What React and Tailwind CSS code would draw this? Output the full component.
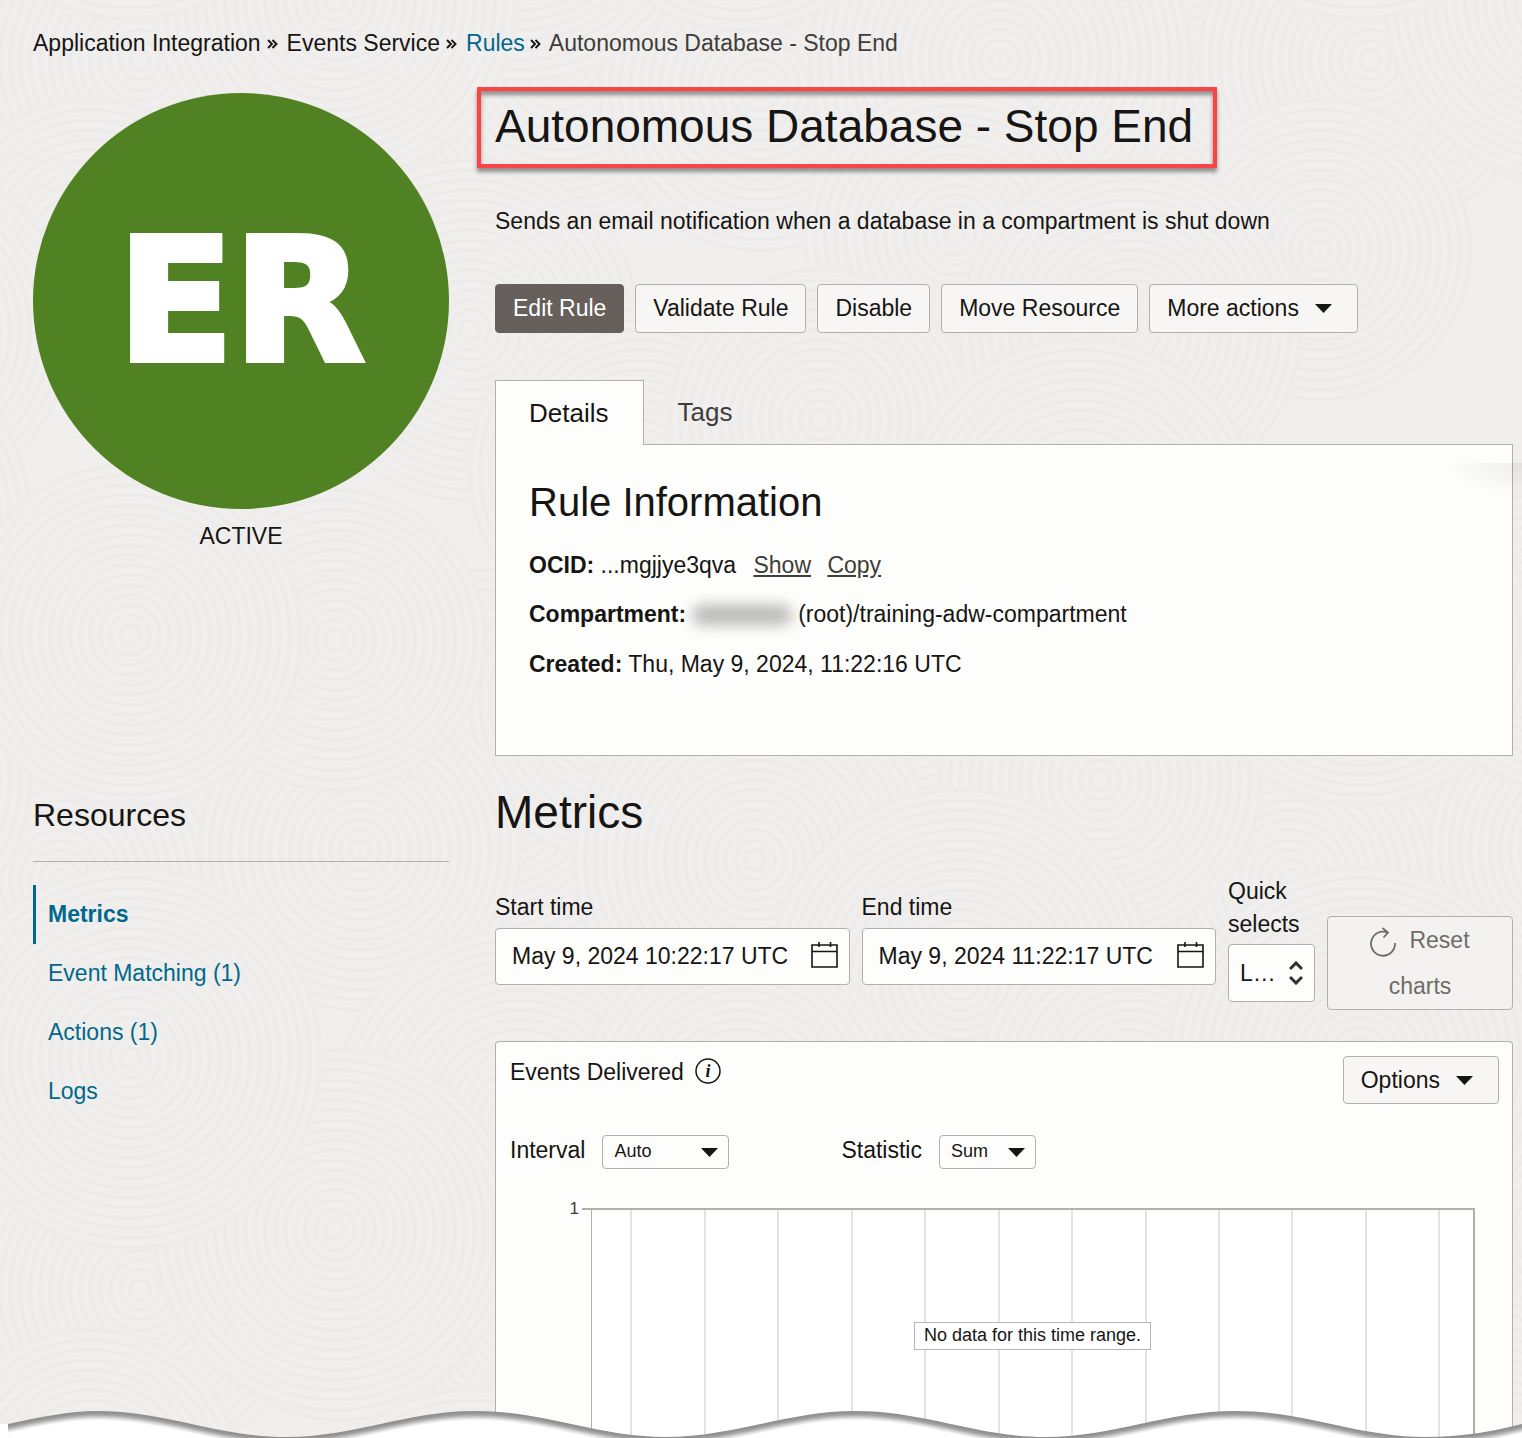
import React from "react";

const RINGS = [
  [480, 760, 190], [60, 880, 170], [0, 90, 150], [140, 60, 170], [340, 40, 150], [560, 60, 180], [760, 90, 160], [1000, 60, 190],
  [90, 250, 150], [470, 330, 170], [640, 470, 170], [955, 235, 150], [1130, 330, 170], [820, 420, 150], [1080, 520, 180],
  [620, 700, 160], [900, 660, 190], [1100, 780, 160], [755, 860, 180], [360, 850, 160], [960, 980, 190], [1130, 1080, 150],
  [520, 1120, 190], [740, 1100, 160], [335, 1230, 180], [130, 1058, 190], [335, 640, 150], [130, 635, 170],
];
const TILE = 1230;

function Backdrop() {
  return (
    <svg aria-hidden="true" className="absolute inset-0 h-full w-full">
      <defs>
        <pattern id="swirl" width={TILE} height={TILE} patternUnits="userSpaceOnUse">
          <rect width={TILE} height={TILE} fill="#f0efed" />
          {RINGS.map(([cx, cy, r], i) =>
            [-TILE, 0, TILE].flatMap((dx) =>
              [-TILE, 0, TILE].map((dy) => (
                <g key={`${i}.${dx}.${dy}`} stroke="#edecea" strokeWidth="4" fill="none">
                  <circle cx={cx + dx} cy={cy + dy} r={r} fill="#f0efed" />
                  {Array.from({ length: Math.floor(r / 10) }, (_, k) => (
                    <circle key={k} cx={cx + dx} cy={cy + dy} r={r - 10 * (k + 1)} />
                  ))}
                </g>
              ))
            )
          )}
        </pattern>
      </defs>
      <rect width="100%" height="100%" fill="url(#swirl)" />
    </svg>
  );
}

function TornEdge() {
  const wave =
    "M8 15 C40 8 70 2 97 2 C165 2 218 28 286 28 C354 28 407 2 475 2 C545 2 597 28 665 28 C735 28 787 2 855 2 C925 2 977 28 1045 28 C1113 28 1167 2 1235 2 C1305 2 1357 28 1425 28 C1462 28 1495 22 1522 15 V60 H8 Z";
  const shades = ["#8f8f8f", "#939393", "#999999", "#a3a3a3", "#b2b2b2", "#c4c4c4", "#d6d6d6", "#e6e6e6", "#f4f4f4", "#ffffff"];
  return (
    <svg aria-hidden="true" viewBox="0 0 1522 29" preserveAspectRatio="none" className="absolute bottom-0 left-0 h-[29px] w-full">
      <rect x="0" y="15" width="9" height="14" fill="#fff" />
      {shades.map((c, i) => (
        <path key={c} d={wave} fill={c} transform={`translate(0 ${i})`} />
      ))}
    </svg>
  );
}

function Chevrons() {
  return (
    <svg aria-hidden="true" width="11" height="10" viewBox="0 0 11 10" fill="none" stroke="#161513" strokeWidth="1.9">
      <path d="M1 1l4 4-4 4M5.500 1l4 4-4 4" />
    </svg>
  );
}

function Caret() {
  return (
    <svg aria-hidden="true" width="17" height="9" viewBox="0 0 17 9" className="pointer-events-none shrink-0">
      <path d="M0 0h17L8.500 9z" fill="#161513" />
    </svg>
  );
}

function CalendarIcon() {
  return (
    <svg aria-hidden="true" width="27" height="26" viewBox="0 0 27 26" fill="none" stroke="#161513" strokeWidth="1.6">
      <path d="M1 3h25v22H1zM1 9.500h25M8 0v5M19.500 0v5" />
    </svg>
  );
}

function TimeField({ id, label, value }) {
  return (
    <div className="flex min-w-0 flex-1 flex-col self-start pt-4">
      <label htmlFor={id} className="mb-1 leading-[33px]">{label}</label>
      <div className="flex h-[57px] items-center rounded border border-[#b4afaa] bg-[#fdfdfb] pr-[11px] pl-4">
        <input id={id} type="text" defaultValue={value} className="min-w-0 flex-1 bg-transparent outline-none" />
        <button type="button" aria-label={`Choose ${label.toLowerCase()}`} className="pb-[3px]"><CalendarIcon /></button>
      </div>
    </div>
  );
}

function SmallSelect({ id, label, value, width }) {
  return (
    <div className="flex items-center">
      <label htmlFor={id}>{label}</label>
      <div className={`relative ml-[17px] mt-[3px] flex items-center ${width}`}>
        <select id={id} className="h-[34px] w-full appearance-none rounded border border-[#b4afaa] bg-[#fdfdfb] pb-[2px] pl-[11px] text-lg leading-none">
          <option>{value}</option>
        </select>
        <span className="pointer-events-none absolute right-[11px]"><Caret /></span>
      </div>
    </div>
  );
}

const GRID = Array.from({ length: 12 }, (_, i) => 4.45 + i * 8.34);
const BTN = "flex h-[49px] items-center rounded border border-[#b4afaa] bg-[#f7f6f4] px-[17px]";

export default function App() {
  return (
    <div className="relative flex min-h-screen flex-col overflow-hidden bg-[#f0efed] font-['Liberation_Sans',Arial,sans-serif] text-[23px] leading-[33px] text-[#161513]">
      <Backdrop />
      <div className="relative flex flex-1 flex-col pr-[9px] pl-[33px]">
        <nav aria-label="Breadcrumb" className="mt-[27px] flex items-center">
          <span>Application Integration</span>
          <span className="mr-[9px] ml-[6px]"><Chevrons /></span>
          <span>Events Service</span>
          <span className="mr-[9px] ml-[6px]"><Chevrons /></span>
          <a href="#rules" className="text-[#00688c]">Rules</a>
          <span className="mr-2 ml-[5px]"><Chevrons /></span>
          <span className="text-[#3f3c39]">Autonomous Database - Stop End</span>
        </nav>

        <div className="flex flex-1 gap-[46px]">
          <aside className="w-[416px] shrink-0 pt-[33px]">
            <div className="flex size-[416px] items-center justify-center rounded-full bg-[#508223] font-['DejaVu_Sans',sans-serif] text-[170px] leading-none font-bold text-white [-webkit-text-stroke:6px_white]">ER</div>
            <p className="mt-[11px] text-center">ACTIVE</p>
            <h2 className="mt-[240px] border-b border-[#b4afaa] pb-[24px] text-[32px] leading-[44px]">Resources</h2>
            <nav aria-label="Resources" className="mt-[23px] flex flex-col">
              <a href="#metrics" className="border-l-3 border-[#00688c] py-[13px] pl-3 font-bold text-[#00688c]">Metrics</a>
              <a href="#events" className="py-[13px] pl-[15px] text-[#00688c]">Event Matching (1)</a>
              <a href="#actions" className="py-[13px] pl-[15px] text-[#00688c]">Actions (1)</a>
              <a href="#logs" className="py-[13px] pl-[15px] text-[#00688c]">Logs</a>
            </nav>
          </aside>

          <main className="flex min-w-0 flex-1 flex-col pt-[27px]">
            <div className="-ml-[18px] flex">
              <h1 className="border-4 border-[#fc4444] pt-[9px] pr-5 pb-3 pl-[14px] text-[46px] leading-[52px] shadow-[0_4px_4px_rgba(0,0,0,0.4),inset_0_4px_4px_rgba(0,0,0,0.4)]">Autonomous Database - Stop End</h1>
            </div>
            <p className="mt-[37px]">Sends an email notification when a database in a compartment is shut down</p>
            <div className="mt-[46px] flex gap-[11px]">
              <button type="button" className="flex h-[49px] items-center rounded border border-[#665f5b] bg-[#665f5b] px-[17px] text-white">Edit Rule</button>
              <button type="button" className={BTN}>Validate Rule</button>
              <button type="button" className={BTN}>Disable</button>
              <button type="button" className={BTN}>Move Resource</button>
              <button type="button" className={`${BTN} gap-4 pr-[25px]`}>More actions <Caret /></button>
            </div>

            <div role="tablist" className="mt-[47px] flex text-[26px]">
              <button type="button" role="tab" aria-selected="true" className="relative z-10 -mb-px h-[65px] border border-b-0 border-[#b4afaa] bg-[#fdfdfb] pr-[35px] pl-[33px]">Details</button>
              <button type="button" role="tab" aria-selected="false" className="px-[33px] text-[#3f3c39]">Tags</button>
            </div>
            <section className="relative border border-[#b4afaa] bg-[#fdfdfb] px-[33px] pt-[31px] pb-[74px]">
              <h2 className="text-[40px] leading-[52px]">Rule Information</h2>
              <p className="mt-[21px]"><b>OCID:</b> ...mgjjye3qva <a href="#show" className="ml-[11px] text-[#3f3c39] underline">Show</a> <a href="#copy" className="ml-[10px] text-[#3f3c39] underline">Copy</a></p>
              <p className="mt-4 flex items-center"><b>Compartment:</b><span aria-hidden="true" className="mx-[6px] h-5 w-[100px] rounded-full bg-[#b9b9b7] blur-[7px]" />(root)/training-adw-compartment</p>
              <p className="mt-[17px]"><b>Created:</b> Thu, May 9, 2024, 11:22:16 UTC</p>
              <div aria-hidden="true" className="pointer-events-none absolute top-[18px] -right-[10px] h-8 w-[80px] bg-[radial-gradient(ellipse_at_top_right,rgba(0,0,0,0.06),transparent_70%)]" />
            </section>

            <h2 className="mt-[30px] text-[46px] leading-[52px]">Metrics</h2>

            <form className="mt-[37px] flex items-end gap-3">
              <TimeField id="start" label="Start time" value="May 9, 2024 10:22:17 UTC" />
              <TimeField id="end" label="End time" value="May 9, 2024 11:22:17 UTC" />
              <div className="flex w-[87px] flex-col self-start">
                <label htmlFor="quick" className="mb-[3px]">Quick selects</label>
                <div className="relative flex items-center">
                  <select id="quick" className="h-[58px] w-full appearance-none truncate rounded border border-[#b4afaa] bg-[#fdfdfb] pr-[36px] pl-[11px]">
                    <option>Last hour</option>
                  </select>
                  <svg aria-hidden="true" width="14" height="24" viewBox="0 0 14 24" fill="none" stroke="#33312f" strokeWidth="3" className="pointer-events-none absolute right-3">
                    <path d="M1 8l6-6 6 6M1 16l6 6 6-6" />
                  </svg>
                </div>
              </div>
              <button type="button" disabled className="-mb-2 w-[186px] self-end rounded border border-[#b4afaa] bg-[#f3f2f0] px-8 text-center leading-[46px] text-[#716b67]">
                <svg aria-hidden="true" width="27" height="30" viewBox="0 0 27 30" fill="none" stroke="#716b67" strokeWidth="1.8" className="mr-3 inline-block">
                  <path d="M25 16A12 12 0 1 1 17.500 5.600M12.500 1l5.500 4.500-4.500 5" />
                </svg>
                Reset charts
              </button>
            </form>

            <section className="mt-[39px] flex flex-1 flex-col rounded-t border border-b-0 border-[#b4afaa] bg-[#fdfdfb] pt-[13px] pr-[13px] pl-[14px]">
              <div className="flex items-start">
                <h3 className="mt-px">Events Delivered</h3>
                <svg aria-hidden="true" width="26" height="26" viewBox="0 0 26 26" className="mt-[3px] ml-[11px]">
                  <circle cx="13" cy="13" r="12" fill="none" stroke="#161513" strokeWidth="1.5" />
                  <text x="13" y="19" textAnchor="middle" fontFamily="Liberation Serif, serif" fontStyle="italic" fontWeight="bold" fontSize="18" fill="#161513">i</text>
                </svg>
                <button type="button" className="mt-px ml-auto flex h-12 items-center gap-4 rounded border border-[#b4afaa] bg-[#f7f6f4] pr-[25px] pl-[17px]">Options <Caret /></button>
              </div>
              <div className="mt-[28px] flex">
                <SmallSelect id="interval" label="Interval" value="Auto" width="w-[127px]" />
                <div className="w-[112px]" />
                <SmallSelect id="statistic" label="Statistic" value="Sum" width="w-[97px]" />
              </div>
              <div className="mt-[28px] flex flex-1 pr-[24px]">
                <span className="w-[72px] shrink-0 pr-[3px] text-right text-[17px] leading-[24px] text-[#3f3c39]">1</span>
                <div className="mt-[11px] h-[2px] w-[9px] bg-[#b4afaa]" />
                <div className="relative mt-[11px] flex min-h-[220px] flex-1 justify-center border-t-2 border-r-2 border-l border-[#b4afaa] bg-white">
                  <svg aria-hidden="true" className="absolute inset-0 h-full w-full" shapeRendering="crispEdges">
                    {GRID.map((x) => (
                      <line key={x} x1={`${x}%`} x2={`${x}%`} y1="0" y2="100%" stroke="#e3e3e3" strokeWidth="2" />
                    ))}
                  </svg>
                  <p className="relative mt-[112px] h-7 border border-[#b3b6c0] bg-white px-[9px] text-lg leading-6">No data for this time range.</p>
                </div>
              </div>
            </section>
          </main>
        </div>
      </div>
      <TornEdge />
    </div>
  );
}
